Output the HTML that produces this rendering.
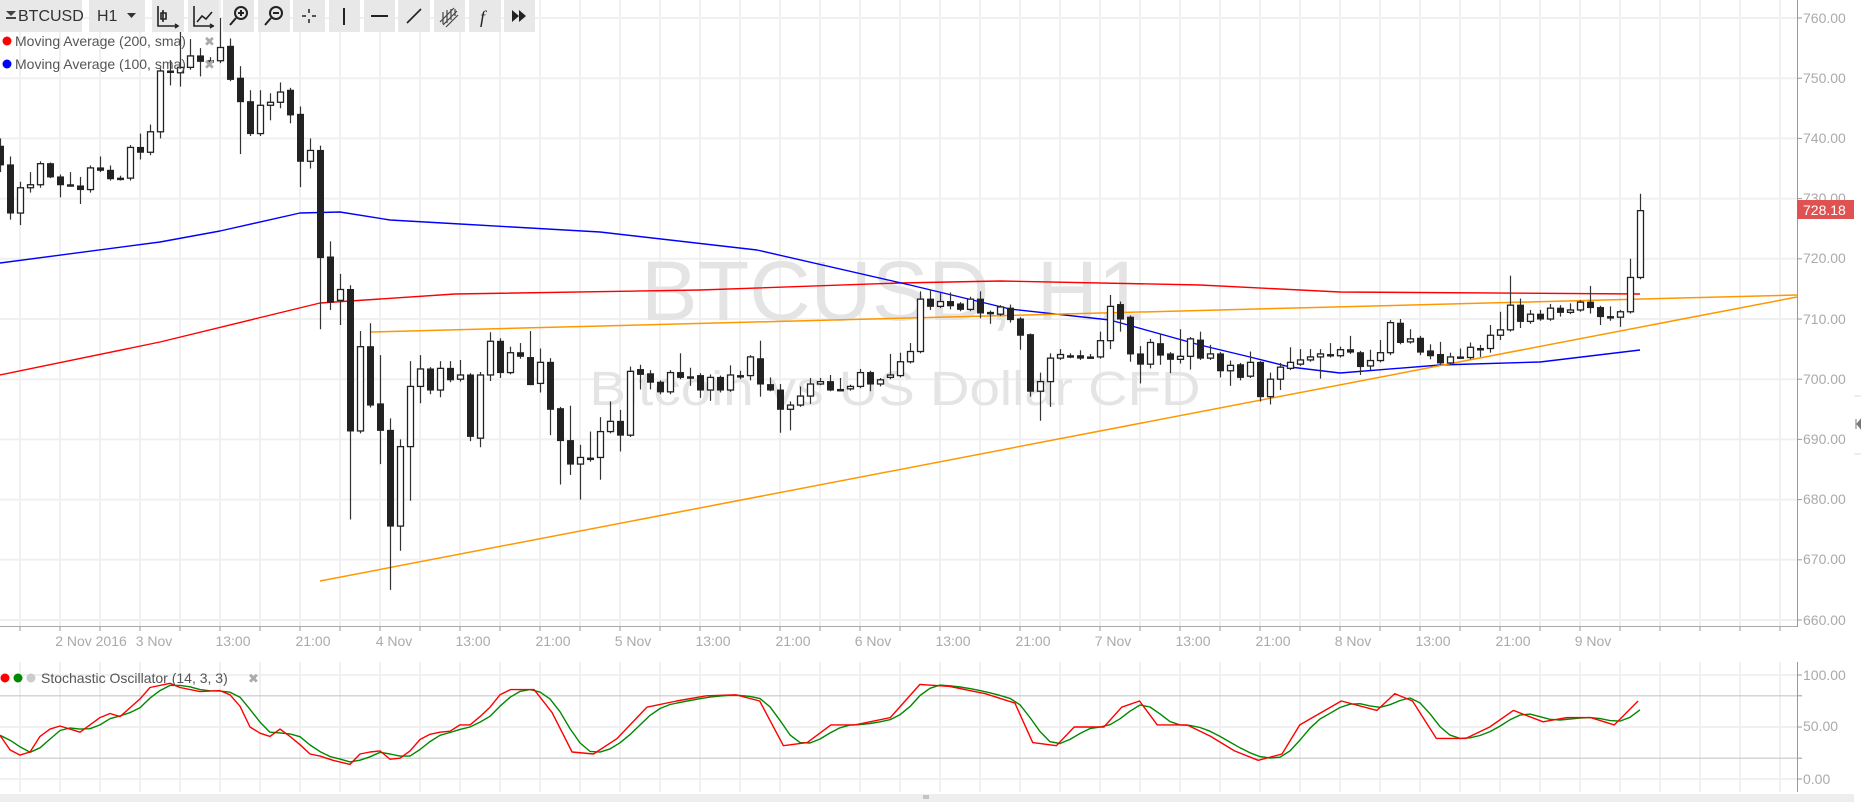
<!DOCTYPE html>
<html><head><meta charset="utf-8">
<style>
html,body{margin:0;padding:0;background:#fff;width:1861px;height:802px;overflow:hidden;font-family:"Liberation Sans",sans-serif}
svg{position:absolute;left:0;top:0}
</style></head>
<body>
<svg id="s" width="1861" height="802" viewBox="0 0 1861 802" xmlns="http://www.w3.org/2000/svg" font-family="Liberation Sans, sans-serif">
<g id="grid"></g>
<text x="893" y="320" font-size="84" fill="#e4e4e4" text-anchor="middle" textLength="504" lengthAdjust="spacingAndGlyphs">BTCUSD, H1</text>
<text x="895" y="405" font-size="48" fill="#e4e4e4" text-anchor="middle" textLength="611" lengthAdjust="spacingAndGlyphs">Bitcoin vs US Dollar CFD</text>
<g id="ma"></g>
<g id="candles"></g>
<g id="axes"></g>
<g id="stoch"></g>
<!-- toolbar -->
<g>
<rect x="0" y="0" width="82" height="32" fill="#e8e8e8"/>
<path d="M6 11h10l-5 5z M6 17h10v2H6z" fill="#444"/>
<text x="18" y="21" font-size="16" fill="#333">BTCUSD</text>
<rect x="89" y="0" width="56" height="32" fill="#e8e8e8"/>
<text x="97" y="21" font-size="16" fill="#333">H1</text>
<path d="M127 13h9l-4.5 5z" fill="#333"/>
<rect x="152" y="0" width="32" height="32" fill="#e8e8e8"/>
<path d="M158 6v20h20 M163 10v12 M161 13h5v6h-5z M175 24l3 2-3 2" stroke="#222" stroke-width="1.6" fill="none"/>
<rect x="188" y="0" width="31" height="32" fill="#e8e8e8"/>
<path d="M194 6v20h20 M197 22l5-6 4 3 6-7 M210 24l3 2-3 2" stroke="#222" stroke-width="1.6" fill="none"/>
<rect x="223" y="0" width="31" height="32" fill="#e8e8e8"/>
<circle cx="241" cy="13" r="6" stroke="#222" stroke-width="2" fill="none"/><path d="M236 18l-6 7 M238 13h6 M241 10v6" stroke="#222" stroke-width="2"/>
<rect x="258" y="0" width="32" height="32" fill="#e8e8e8"/>
<circle cx="276" cy="13" r="6" stroke="#222" stroke-width="2" fill="none"/><path d="M271 18l-6 7 M273 13h6" stroke="#222" stroke-width="2"/>
<rect x="293" y="0" width="32" height="32" fill="#e8e8e8"/>
<path d="M309 9v4 M309 19v4 M302 16h4 M312 16h4" stroke="#222" stroke-width="1.5"/>
<rect x="329" y="0" width="31" height="32" fill="#e8e8e8"/>
<path d="M344 8v17" stroke="#222" stroke-width="2"/>
<rect x="364" y="0" width="31" height="32" fill="#e8e8e8"/>
<path d="M371 16h17" stroke="#222" stroke-width="2"/>
<rect x="398" y="0" width="32" height="32" fill="#e8e8e8"/>
<path d="M407 23l14-14" stroke="#222" stroke-width="1.6"/>
<rect x="434" y="0" width="31" height="32" fill="#e8e8e8"/>
<path d="M440 22l14-14 M443 25l14-14 M446 27l12-12 M443 12v12 M447 10v13 M451 9v11 M455 9v7" stroke="#444" stroke-width="1.2" fill="none"/>
<rect x="469" y="0" width="32" height="32" fill="#e8e8e8"/>
<text x="480" y="23" font-size="18" font-style="italic" font-family="Liberation Serif, serif" fill="#222">f</text>
<rect x="504" y="0" width="31" height="32" fill="#e8e8e8"/>
<path d="M512 10l7 6-7 6z M519 10l7 6-7 6z" fill="#222"/>
</g>
<!-- legend -->
<circle cx="7" cy="41" r="4.5" fill="#f00"/>
<text x="15" y="46" font-size="14" fill="#555">Moving Average (200, sma)</text>
<text x="204" y="46" font-size="13" fill="#aaa">✖</text>
<circle cx="7" cy="64" r="4.5" fill="#00f"/>
<text x="15" y="69" font-size="14" fill="#555">Moving Average (100, sma)</text>
<text x="204" y="69" font-size="13" fill="#aaa">✖</text>
<circle cx="5" cy="678" r="4.5" fill="#f00"/>
<circle cx="18" cy="678" r="4.5" fill="#080"/>
<circle cx="31" cy="678" r="4.5" fill="#ccc"/>
<text x="41" y="683" font-size="14" fill="#555">Stochastic Oscillator (14, 3, 3)</text>
<text x="248" y="683" font-size="13" fill="#aaa">✖</text>
<!-- time labels -->
<g font-size="14" fill="#aaa" text-anchor="middle">
<text x="91" y="646">2 Nov 2016</text><text x="154" y="646">3 Nov</text><text x="233" y="646">13:00</text><text x="313" y="646">21:00</text>
<text x="394" y="646">4 Nov</text><text x="473" y="646">13:00</text><text x="553" y="646">21:00</text>
<text x="633" y="646">5 Nov</text><text x="713" y="646">13:00</text><text x="793" y="646">21:00</text>
<text x="873" y="646">6 Nov</text><text x="953" y="646">13:00</text><text x="1033" y="646">21:00</text>
<text x="1113" y="646">7 Nov</text><text x="1193" y="646">13:00</text><text x="1273" y="646">21:00</text>
<text x="1353" y="646">8 Nov</text><text x="1433" y="646">13:00</text><text x="1513" y="646">21:00</text>
<text x="1593" y="646">9 Nov</text>
</g>
<!-- price labels -->
<g font-size="14" fill="#aaa">
<text x="1803" y="23">760.00</text><text x="1803" y="83">750.00</text><text x="1803" y="143">740.00</text>
<text x="1803" y="203">730.00</text><text x="1803" y="263">720.00</text><text x="1803" y="324">710.00</text>
<text x="1803" y="384">700.00</text><text x="1803" y="444">690.00</text><text x="1803" y="504">680.00</text>
<text x="1803" y="564">670.00</text><text x="1803" y="625">660.00</text>
<text x="1803" y="680">100.00</text><text x="1803" y="731">50.00</text><text x="1803" y="784">0.00</text>
</g>
<rect x="1797" y="200" width="57" height="19" fill="#e05252"/>
<text x="1803" y="215" font-size="14" fill="#fff">728.18</text>
<path d="M1854 396h7 M1854 454h7" stroke="#ddd"/>
<path d="M1856 419v10 M1861 419l-4 5 4 5z" stroke="#777" fill="#777"/>
<rect x="0" y="794" width="1854" height="8" fill="#eee"/>
<path d="M923 796h6 M923 798h6" stroke="#999"/>
</svg>
<script>
var NS="http://www.w3.org/2000/svg";
function el(p,t,a){var e=document.createElementNS(NS,t);for(var k in a)e.setAttribute(k,a[k]);p.appendChild(e);return e;}
function Y(p){return 18+(760-p)*6.02;}
var grid=document.getElementById('grid'),axes=document.getElementById('axes');
for(var x=20;x<1797;x+=40){el(grid,'line',{x1:x,y1:0,x2:x,y2:626,stroke:'#f0f0f0','stroke-width':2});el(grid,'line',{x1:x,y1:662,x2:x,y2:792,stroke:'#f0f0f0','stroke-width':2});el(axes,'line',{x1:x,y1:626,x2:x,y2:631,stroke:'#999'});}
for(var p=660;p<=760;p+=10){var y=Y(p);el(grid,'line',{x1:0,y1:y,x2:1797,y2:y,stroke:'#f0f0f0','stroke-width':2});el(axes,'line',{x1:1797,y1:y,x2:1802,y2:y,stroke:'#999'});}
[[100,'#f0f0f0'],[50,'#f0f0f0'],[0,'#f0f0f0'],[80,'#c8c8c8'],[20,'#c8c8c8']].forEach(function(a){var y=779-a[0]*1.04;el(grid,'line',{x1:0,y1:y,x2:1797,y2:y,stroke:a[1],'stroke-width':a[1]=='#f0f0f0'?2:1.2});el(axes,'line',{x1:1797,y1:y,x2:1802,y2:y,stroke:'#999'});});
el(axes,'line',{x1:0,y1:626.5,x2:1797,y2:626.5,stroke:'#aaa'});
el(axes,'line',{x1:1797.5,y1:0,x2:1797.5,y2:627,stroke:'#999'});
el(axes,'line',{x1:1797.5,y1:662,x2:1797.5,y2:792,stroke:'#999'});
var ma=document.getElementById('ma');
function pl(g,pts,c,w){el(g,'polyline',{points:pts.map(function(q){return q.join(',')}).join(' '),fill:'none',stroke:c,'stroke-width':w||1.4,'stroke-linejoin':'round'});}
pl(ma,[[0,375],[160,342],[320,303],[455,294],[700,290],[900,283],[1000,281],[1200,285],[1340,292],[1640,294]],'#f00');
pl(ma,[[0,263],[160,242],[220,231],[300,213],[340,212],[390,220],[460,224],[600,232],[757,250],[910,285],[1010,309],[1110,320],[1200,345],[1250,357],[1290,367],[1340,373],[1440,365],[1540,362],[1640,350]],'#00f');
pl(ma,[[370,332],[1797,295]],'#ff9800',1.5);
pl(ma,[[320,581],[1797,297]],'#ff9800',1.5);
var D=[[738.7,735.6,740,734.4],[735.6,727.6,737,726.5],[727.6,731.8,732.8,725.6],[731.8,732.3,734.4,731],[732.3,735.8,736.2,731.8],[735.8,733.6,736,733.4],[733.6,732.3,734,730.2],[732.3,732.3,734.4,732],[732.1,731.5,733.6,729.1],[731.5,735.1,735.5,731],[735.1,734.7,737,734.4],[734.7,733.3,735.5,733],[733.4,733.4,733.8,733],[733.4,738.5,738.9,733],[738.5,737.7,740.8,736.5],[737.7,741.1,742.3,737.2],[741.1,751.2,751.6,740],[751.2,751.2,753,748.8],[750.9,751.8,760,748.6],[751.8,753.7,756.5,751.4],[753.7,752.8,755,750.3],[752.9,752.9,753.5,752.4],[752.9,755.1,760,752.5],[755.3,749.8,756.6,749.5],[750,746.1,752,737.4],[746.1,740.8,748,740.4],[740.8,745.5,748,740.4],[745.5,746,747.5,743],[746,747.7,749.3,745],[748,743.9,748.4,742.5],[744,736.2,745.3,731.9],[736.2,738,740,735],[738,720.2,738.8,708.3],[720.3,712.8,722.9,711.5],[713.1,714.9,717.5,709],[714.9,691.4,715.6,676.7],[691.4,705.4,708,691],[705.4,695.7,709.3,695.3],[695.9,691.5,704,685.9],[691.5,675.6,693.5,665],[675.6,688.8,690,671.5],[688.8,698.8,703,679.8],[698.8,701.7,704,696],[701.7,698.2,702,697.5],[698.2,701.8,703,697],[701.8,699.9,703,699.5],[700,700.7,703.2,699.6],[700.7,690.5,701,689.7],[690.2,700.7,701.2,688.7],[700.7,706.3,707.8,699.7],[706.3,701.1,706.8,700.2],[701.1,704.4,705.4,700.8],[704.4,703.8,706,703.4],[703.6,699.1,708,699],[699.3,702.8,705.1,697.8],[702.8,695,703.5,690.7],[695.1,689.8,695.4,682.5],[689.8,685.9,695.6,684.1],[685.9,687,689.1,680],[686.9,686.9,691.3,686.3],[687,691.3,693.7,683.3],[691.3,693,696.3,691],[693,690.7,694.9,688],[690.7,701.3,702.1,690.4],[701.6,700.8,702.4,698.3],[700.9,699.5,701.5,698.3],[699.5,697.9,699.8,697.5],[697.9,701.1,701.5,697.5],[701.1,700.3,704.3,700],[700.4,700.4,701.9,698.9],[700.6,698.2,701,696.9],[698.2,700.3,700.8,696.4],[700.3,698.2,700.6,697.8],[698.2,700.7,702.3,697.9],[700.6,700.6,701.4,700],[700.6,703.7,704,699.8],[703.4,699.2,706.4,697.1],[699.1,698.2,700.3,698],[698.2,695,699.2,691.1],[695,695.7,696.3,691.5],[695.7,697.2,698.8,695.4],[697.2,699.2,700.2,695.9],[699.2,699.6,700.2,699],[699.6,698.2,700.7,698],[698.3,698.3,700.2,698],[698.4,698.8,699.1,698.1],[698.8,701.1,701.7,698.5],[701.1,699.2,701.4,698],[699.2,699.9,700.2,698.8],[700.3,700.7,704.2,700],[700.6,702.9,704.4,700.3],[702.9,704.6,706,702.6],[704.6,713.3,714.6,704.3],[713.3,712.1,714.9,711.5],[712.1,712.9,714.3,711.8],[712.9,712.2,714.4,711.6],[712.5,711.6,712.8,711.3],[711.6,713.3,713.7,711.3],[713.3,711,714.6,710.1],[711.1,711.1,711.4,709.2],[710.8,712,712.3,710.5],[711.8,709.9,712.4,709.4],[710,707.3,710.3,704.9],[707.4,698,707.6,697.1],[698,699.6,701.1,693.1],[699.6,703.5,704.3,695.4],[703.5,704.1,705,703.2],[703.9,703.9,704.3,703.5],[703.9,703.5,704.8,703.2],[703.7,703.7,704.2,703.4],[703.7,706.4,707.9,703.4],[706.4,712.1,714,705],[712.4,710,712.9,707.9],[710.3,704.2,710.6,702.9],[704.2,702.5,705.5,699.3],[702.5,706.1,706.7,701.8],[705.9,704,707.6,702.4],[704.2,703.3,704.5,701],[703.3,703.8,708.3,702.6],[703.8,706.7,707,701.6],[706.5,703.5,707.9,703.2],[703.5,704.2,705.7,703.2],[704.2,701.4,704.5,700.3],[701.4,702.3,703.1,698.9],[702.4,700.3,702.7,699.8],[700.5,702.8,704.6,700.2],[702.8,697.1,703,696.3],[697.1,700,701.1,695.8],[700,702,702.7,698.2],[701.8,702.8,705.3,701.5],[702.5,703.2,705,702.2],[703.2,703.7,705,702.9],[703.7,704.2,705,700.1],[704.1,703.9,706,703.6],[703.9,704.9,705.4,703.6],[704.9,704.5,707.2,704.2],[704.4,702.1,704.7,700.7],[702.2,703.1,704.9,701.5],[703.1,704.4,706.5,702.8],[704.4,709.4,709.8,704],[709.3,706.1,710,705.8],[706.2,706.7,708.3,705.9],[706.8,704.5,707.2,704],[704.7,703.9,705.8,703.3],[704.1,702.7,706.2,702.4],[702.7,703.7,704.4,702.3],[703.7,703.7,705.1,703.4],[703.6,705.3,706.1,703.3],[705.1,705.1,705.7,703.7],[705.1,707.3,709,704.4],[707.3,708.2,711.2,706.5],[708.2,712.3,717.2,707.9],[712.3,709.6,713.4,708.5],[709.6,710.8,711.5,709.2],[710.8,710,711.5,709.7],[710,711.8,712.5,709.7],[711.8,711.1,712.3,710.4],[711.1,711.5,712.6,710.8],[711.5,712.8,713.1,711.2],[712.8,711.9,715.5,710.9],[711.9,710.4,712.2,709],[710.4,710.4,712.1,709.7],[710.3,711.2,711.5,708.7],[711.2,716.9,720,710.9],[716.9,728.0,730.8,716.6]];
var cg=document.getElementById('candles');
D.forEach(function(d,k){var x=k*10,o=d[0],c=d[1],h=d[2],l=d[3];
 var top=Y(Math.max(o,c)),bot=Y(Math.min(o,c));if(bot-top<1.5){bot=top+1.5;}
 el(cg,'line',{x1:x+0.5,y1:Y(h),x2:x+0.5,y2:Y(l),stroke:'#333','stroke-width':1.2});
 if(c>=o&&Math.abs(c-o)>0.15) el(cg,'rect',{x:x-2.5,y:top,width:6,height:bot-top,fill:'#fff',stroke:'#222','stroke-width':1.3});
 else el(cg,'rect',{x:x-3,y:top-0.5,width:7,height:bot-top+1,fill:'#222'});
});
// stochastic
var R=[[0,42],[10,28],[20,23],[30,26],[40,41],[50,48],[60,51],[80,45],[100,59],[110,63],[120,60],[140,77],[150,88],[170,92],[180,88],[200,84],[220,85],[230,81],[240,70],[250,50],[260,44],[270,41],[280,48],[290,41],[300,33],[310,24],[320,22],[333,18],[350,14],[360,24],[370,26],[380,27],[390,19],[400,20],[410,27],[420,38],[430,43],[440,45],[450,46],[460,52],[470,52],[480,60],[490,69],[500,81]];
[[430,86],[450,86],[465,64],[482,26],[500,24],[520,39],[545,69],[570,75],[595,80],[620,81],[640,75],[660,32],[680,35],[700,52],[720,52],[750,59],[775,91],[800,89],[830,82],[855,73],[870,35],[890,32],[905,50],[930,50],[945,69],[960,75],[975,52],[1000,52],[1020,41],[1040,27],[1060,18],[1080,24],[1095,52],[1130,75],[1160,66],[1175,82],[1190,75],[1210,39],[1235,39],[1255,50],[1275,66],[1300,55],[1320,59],[1340,59],[1360,52],[1380,75]].forEach(function(q){R.push([q[0]*1.187,q[1]]);});
function rv(x){if(x<=R[0][0])return R[0][1];for(var i=1;i<R.length;i++){if(x<=R[i][0]){var a=R[i-1],b=R[i];return a[1]+(b[1]-a[1])*(x-a[0])/(b[0]-a[0]);}}return R[R.length-1][1];}
var sg=document.getElementById('stoch'),gp=[],rp=[];
for(var x=0;x<=1640;x+=10){var g=(rv(x)+rv(x-10)+rv(x-20))/3;gp.push([x,(779-g*1.04).toFixed(1)]);}
R.forEach(function(q){rp.push([q[0].toFixed(1),(779-q[1]*1.04).toFixed(1)]);});
pl(sg,gp,'#080',1.4);pl(sg,rp,'#f00',1.4);
</script>
</body></html>
